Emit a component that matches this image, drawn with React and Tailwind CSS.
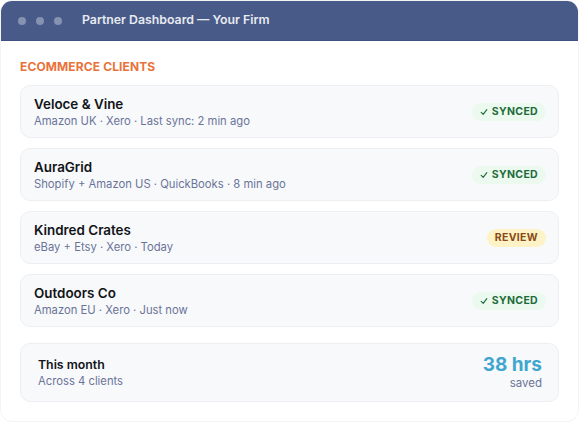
import React from 'react';

const clients = [
  { name: 'Veloce & Vine', meta: 'Amazon UK · Xero · Last sync: 2 min ago', status: 'synced' },
  { name: 'AuraGrid', meta: 'Shopify + Amazon US · QuickBooks · 8 min ago', status: 'synced' },
  { name: 'Kindred Crates', meta: 'eBay + Etsy · Xero · Today', status: 'review' },
  { name: 'Outdoors Co', meta: 'Amazon EU · Xero · Just now', status: 'synced' },
];

const Badge = ({ status }) => {
  if (status === 'review') {
    return (
      <span className="rounded-full bg-[#fdf3c6] px-[8px] py-[2px] text-[10.5px] font-bold leading-[14px] tracking-[0.03em] text-[#8a4a14]">
        REVIEW
      </span>
    );
  }
  return (
    <span className="flex items-center gap-[4px] rounded-full bg-[#ebf9ee] px-[8px] py-[2px] text-[10.5px] font-bold leading-[14px] tracking-[0.03em] text-[#1e6b3c]">
      <svg width="8" height="8" viewBox="0 0 10 10" fill="none" stroke="currentColor" strokeWidth="1.4" strokeLinecap="round" strokeLinejoin="round">
        <path d="M1.5 5.5 L4 8 L8.5 2" />
      </svg>
      SYNCED
    </span>
  );
};

const App = () => {
  return (
    <div
      className="h-[422px] w-[579px] overflow-hidden rounded-xl border border-[#f3f4f6] bg-white"
      style={{ fontFamily: 'Inter, "Noto Sans", sans-serif' }}
    >
      <header className="flex h-10 items-center border-b border-[#3f5180] bg-[#475a88] px-[17px]">
        <div className="flex gap-[10px]">
          <span className="h-2 w-2 rounded-full bg-[#8692b1]"></span>
          <span className="h-2 w-2 rounded-full bg-[#8692b1]"></span>
          <span className="h-2 w-2 rounded-full bg-[#8692b1]"></span>
        </div>
        <h1 className="ml-[20px] text-[12.3px] font-semibold text-[#e7eaf1]">Partner Dashboard — Your Firm</h1>
      </header>

      <main className="px-[19px] pt-[18px]">
        <h2 className="text-[12px] font-bold leading-[16px] tracking-[0.01em] text-[#e8733a]">ECOMMERCE CLIENTS</h2>

        <div className="mt-[10px] flex flex-col gap-[10px]">
          {clients.map((c) => (
            <div
              key={c.name}
              className="flex h-[53px] items-center justify-between rounded-[10px] border border-[#eceef2] bg-[#f8f9fb] pl-[13px] pr-[12px]"
            >
              <div className="flex flex-col">
                <span className="text-[13.4px] font-semibold leading-[18px] text-[#111418]">{c.name}</span>
                <span className="text-[11.25px] leading-[16px] text-[#6a7499]">{c.meta}</span>
              </div>
              <Badge status={c.status} />
            </div>
          ))}
        </div>

        <div className="mt-[16px] flex h-[59px] items-center justify-between rounded-[10px] border border-[#eceef2] bg-[#f8f9fb] pl-[17px] pr-[16px]">
          <div className="flex flex-col">
            <span className="text-[12.3px] font-semibold leading-[17px] text-[#111418]">This month</span>
            <span className="text-[11.25px] leading-[16px] text-[#6a7499]">Across 4 clients</span>
          </div>
          <div className="flex flex-col items-end">
            <span className="text-[19px] font-bold leading-[22px] text-[#3fa6d0]">38 hrs</span>
            <span className="text-[11.5px] leading-[15px] text-[#6a7499]">saved</span>
          </div>
        </div>
      </main>
    </div>
  );
};

export default App;
